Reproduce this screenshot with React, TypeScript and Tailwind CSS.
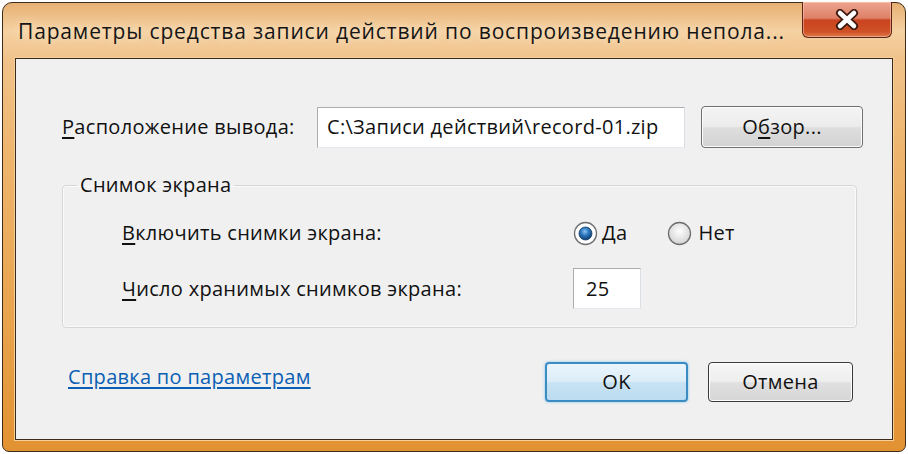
import React from 'react'

const font = "font-['Open_Sans','Noto_Sans',sans-serif]"

function CloseGlyph() {
  return (
    <svg width="24" height="21" viewBox="0 0 24 21">
      <path d="M5 4 L19 17 M19 4 L5 17" stroke="#3b1a10" strokeWidth="8" strokeLinecap="round" />
      <path d="M5 4 L19 17 M19 4 L5 17" stroke="#ffffff" strokeWidth="4.5" strokeLinecap="round" />
    </svg>
  )
}

function Radio({ checked }: { checked: boolean }) {
  return (
    <svg width="25" height="25" viewBox="0 0 25 25">
      <defs>
        <radialGradient id="rbg" cx="50%" cy="40%" r="60%">
          <stop offset="0%" stopColor="#ffffff" />
          <stop offset="100%" stopColor="#d2d2d2" />
        </radialGradient>
        <radialGradient id="rdot" cx="45%" cy="35%" r="65%">
          <stop offset="0%" stopColor="#8cc4f2" />
          <stop offset="45%" stopColor="#2f79c0" />
          <stop offset="100%" stopColor="#0d3c70" />
        </radialGradient>
      </defs>
      <circle cx="12.5" cy="12.5" r="11" fill={checked ? '#ffffff' : 'url(#rbg)'} stroke="#6f6f6f" strokeWidth="1.3" />
      {checked && <circle cx="12.5" cy="12.5" r="6.5" fill="url(#rdot)" stroke="#0e3a66" strokeWidth="0.8" />}
    </svg>
  )
}

export default function App() {
  return (
    <div className={`w-[908px] h-[454px] bg-white p-[2px] ${font}`}>
      <div className="h-full flex flex-col rounded-t-[10px] rounded-b-[7px] border border-[#3e2c1a] bg-[linear-gradient(to_bottom,#e7b073_0px,#f5d1a2_28px,#f0c28a_56px,#eeb670_140px,#e8a24a_330px,#e29232_100%)] px-[12px] pb-[11px]">
        {/* Title bar */}
        <div className="h-[55px] flex items-start">
          <span className="pt-[15px] pl-[3px] text-[21px] leading-[26px] tracking-[0.85px] text-[#151515] whitespace-nowrap [text-shadow:0_0_10px_rgba(255,240,215,0.9)]">
            Параметры средства записи действий по воспроизведению непола...
          </span>
          <button className="ml-auto mr-[1px] -mt-px w-[90px] h-[36px] shrink-0 flex items-center justify-center rounded-b-[6px] border border-t-0 border-[#5b2416] bg-[linear-gradient(to_bottom,#eda490_0%,#de8066_46%,#c9431f_52%,#cf5226_85%,#df7a4c_100%)] shadow-[inset_0_0_0_1px_rgba(255,210,190,0.5)]">
            <CloseGlyph />
          </button>
        </div>

        {/* Client area */}
        <div className="flex-1 flex flex-col border border-[#3a2a1c] bg-[#f0f0f0] shadow-[0_0_0_1px_#f7cf98] pl-[46px] text-[20px] tracking-[0.3px] text-[#111]">
          {/* Output location */}
          <div className="mt-[47px] h-[42px] flex items-center">
            <span className="w-[255px] whitespace-nowrap">
              <span className="underline underline-offset-[3px]">Р</span>асположение вывода:
            </span>
            <div className="w-[368px] h-[41px] flex items-center pl-[9px] bg-white border border-[#abadb3] border-r-[#dbdfe6] border-b-[#e3e9ef] whitespace-nowrap">
              C:\Записи действий\record-01.zip
            </div>
            <button className="ml-[16px] w-[162px] h-[42px] rounded-[4px] border border-[#707070] bg-[linear-gradient(to_bottom,#f4f4f4_0%,#ececec_48%,#dedede_52%,#d2d2d2_100%)] shadow-[inset_0_0_0_1px_#fcfcfc]">
              О<span className="underline underline-offset-[3px]">б</span>зор...
            </button>
          </div>

          {/* Screenshot group */}
          <fieldset className="mt-[25px] w-[795px] rounded-[4px] border border-[#d3d7da] shadow-[inset_0_0_0_1px_#fafafa] px-[14px] pb-[18px]">
            <legend className="px-[3px] leading-[24px]">Снимок экрана</legend>
            <div className="pl-[45px] pt-[21px]">
              <div className="h-[30px] flex items-center">
                <span className="w-[451px] whitespace-nowrap">
                  <span className="underline underline-offset-[3px]">В</span>ключить снимки экрана:
                </span>
                <label className="flex items-center gap-[4px]">
                  <Radio checked />
                  <span>Да</span>
                </label>
                <label className="ml-[40px] flex items-center gap-[6px]">
                  <Radio checked={false} />
                  <span>Нет</span>
                </label>
              </div>
              <div className="mt-[20px] h-[41px] flex items-center">
                <span className="w-[451px] whitespace-nowrap">
                  <span className="underline underline-offset-[3px]">Ч</span>исло хранимых снимков экрана:
                </span>
                <div className="w-[68px] h-[41px] flex items-center pl-[12px] bg-white border border-[#abadb3] border-r-[#dbdfe6] border-b-[#e3e9ef]">
                  25
                </div>
              </div>
            </div>
          </fieldset>

          {/* Footer */}
          <div className="mt-[34px] h-[40px] flex items-center">
            <a className="ml-[6px] -mt-[10px] text-[#0a5fb4] underline underline-offset-[3px] whitespace-nowrap">Справка по параметрам</a>
            <button className="ml-auto w-[143px] h-[40px] rounded-[4px] border-2 border-[#3c8cc4] bg-[linear-gradient(to_bottom,#eaf5fc_0%,#dcedf8_48%,#c8e2f3_52%,#bcdcf1_100%)] shadow-[0_0_3px_#7fc0ea]">
              OK
            </button>
            <button className="ml-[20px] mr-[39px] w-[145px] h-[40px] rounded-[4px] border border-[#3a3a3a] bg-[linear-gradient(to_bottom,#f6f6f6_0%,#eeeeee_48%,#e0e0e0_52%,#d6d6d6_100%)] shadow-[inset_0_0_0_1px_#fdfdfd]">
              Отмена
            </button>
          </div>
        </div>
      </div>
    </div>
  )
}
